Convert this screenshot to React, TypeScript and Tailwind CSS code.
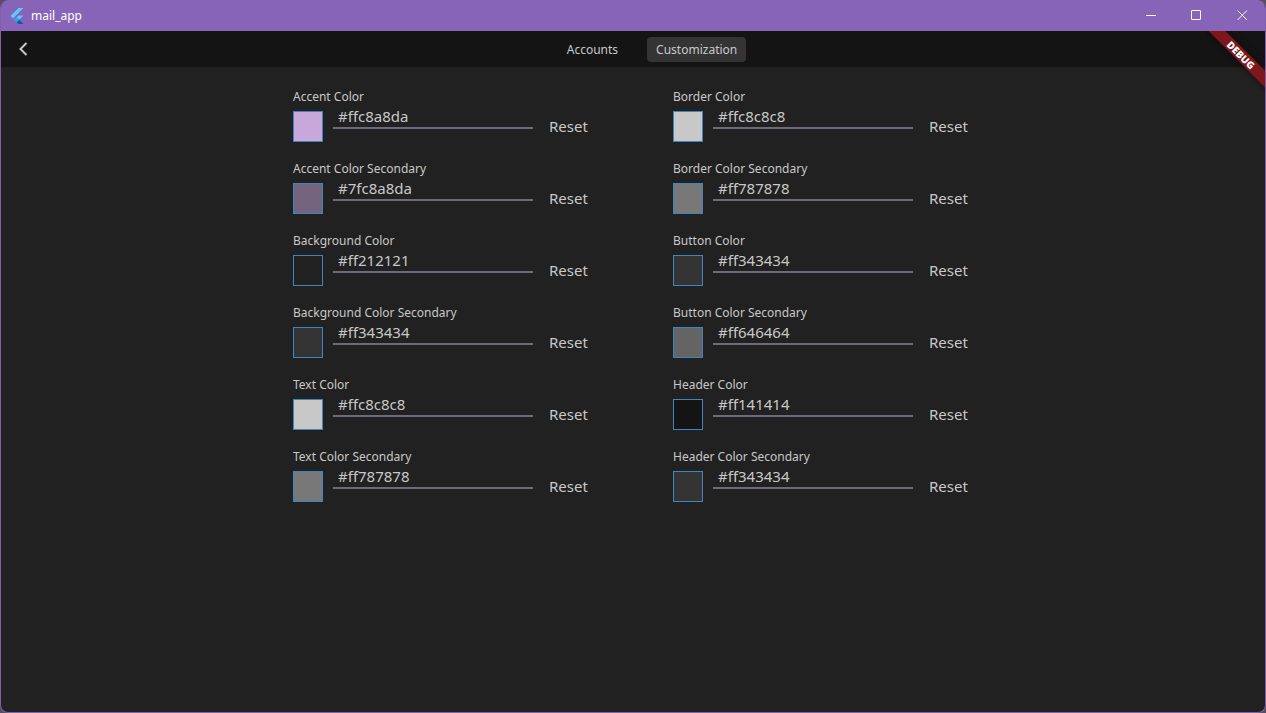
import { useState } from "react";

type Field = { label: string; initial: string };

const LEFT: Field[] = [
  { label: "Accent Color", initial: "#ffc8a8da" },
  { label: "Accent Color Secondary", initial: "#7fc8a8da" },
  { label: "Background Color", initial: "#ff212121" },
  { label: "Background Color Secondary", initial: "#ff343434" },
  { label: "Text Color", initial: "#ffc8c8c8" },
  { label: "Text Color Secondary", initial: "#ff787878" },
];

const RIGHT: Field[] = [
  { label: "Border Color", initial: "#ffc8c8c8" },
  { label: "Border Color Secondary", initial: "#ff787878" },
  { label: "Button Color", initial: "#ff343434" },
  { label: "Button Color Secondary", initial: "#ff646464" },
  { label: "Header Color", initial: "#ff141414" },
  { label: "Header Color Secondary", initial: "#ff343434" },
];

// Values are stored as #aarrggbb, while CSS expects #rrggbbaa.
function toCss(argb: string) {
  return /^#[0-9a-f]{8}$/i.test(argb) ? `#${argb.slice(3)}${argb.slice(1, 3)}` : "transparent";
}

function ColorField({ label, initial }: Field) {
  const [value, setValue] = useState(initial);
  const id = label.toLowerCase().replace(/ /g, "-");
  return (
    <div className="flex flex-col">
      <label htmlFor={id} className="text-[12px] leading-[18px]">
        {label}
      </label>
      <div className="flex h-[41px] items-center">
        <button
          type="button"
          aria-label={`Pick ${label}`}
          className="h-[31px] w-[30px] shrink-0 border border-[#3d87be]"
          style={{ backgroundColor: toCss(value) }}
        />
        <input
          id={id}
          type="text"
          value={value}
          onChange={(e) => setValue(e.target.value)}
          className="ml-[10px] h-[23px] w-[200px] self-start border-b-2 border-[#706a7a] bg-transparent px-[5px] pb-0.5 text-[15px] leading-[19px] outline-none"
        />
        <button type="button" onClick={() => setValue(initial)} className="h-[31px] px-4 text-[15px] leading-[21px]">
          Reset
        </button>
      </div>
    </div>
  );
}

function FlutterLogo() {
  return (
    <svg viewBox="2 0 20 24" className="h-4 w-[14px]" aria-hidden="true">
      <path fill="#5ccbfa" d="M14.314 0L2.3 12 6 15.7 21.684.013h-7.357z" />
      <path fill="#5ccbfa" d="M14.328 11.072L7.857 17.53l3.69 3.69L21.7 11.072z" />
      <path fill="#0b5ba5" d="M11.547 21.22l2.78 2.78H21.7l-6.46-6.468z" />
      <path fill="#29a3e8" d="M7.857 17.53l3.69-3.69 3.693 3.692-3.693 3.688z" />
    </svg>
  );
}

export default function App() {
  return (
    <div className="min-h-screen bg-[#55505c]">
      <div className="relative flex min-h-screen flex-col overflow-hidden rounded-lg border-x border-b border-[#7f5fae] bg-[#212121] font-['Noto_Sans','Open_Sans',sans-serif] text-[#c8c8c8]">
        <div className="flex h-[31px] items-center bg-[#8764b8] pl-[9px] text-white">
          <FlutterLogo />
          <span className="ml-[7px] text-[12px] leading-4">mail_app</span>
          <div className="ml-auto flex h-full">
            <button type="button" aria-label="Minimize" className="flex w-[45px] items-center justify-center">
              <svg viewBox="0 0 11 11" className="size-[11px]" stroke="currentColor" fill="none">
                <path d="M1 5.5h10" />
              </svg>
            </button>
            <button type="button" aria-label="Maximize" className="flex w-[46px] items-center justify-center">
              <svg viewBox="0 0 11 11" className="size-[11px]" stroke="currentColor" fill="none">
                <rect x=".5" y=".5" width="9" height="9" rx=".5" />
              </svg>
            </button>
            <button type="button" aria-label="Close" className="flex w-[46px] items-center justify-center">
              <svg viewBox="0 0 11 11" className="size-[11px]" stroke="currentColor" fill="none">
                <path d="M.5.5l9.500 9.500M10 .5L.5 10" />
              </svg>
            </button>
          </div>
        </div>

        <header className="grid h-9 grid-cols-[1fr_auto_1fr] items-center bg-[#141414]">
          <button type="button" aria-label="Back" className="ml-[15px] flex size-4 items-center justify-center">
            <svg viewBox="0 0 16 16" className="size-4" stroke="currentColor" strokeWidth="2" fill="none">
              <path d="M10.500 2L4.500 8l6 6" />
            </svg>
          </button>
          <nav className="ml-[38px] flex gap-5 text-[12px] leading-[17px]">
            <button type="button" className="h-[25px] rounded px-[9px]">
              Accounts
            </button>
            <button type="button" className="h-[25px] rounded bg-[#343434] px-[9px]">
              Customization
            </button>
          </nav>
        </header>

        <main className="mx-auto grid w-full max-w-[760px] grid-cols-2 pt-[21px]">
          {[LEFT, RIGHT].map((fields, i) => (
            <div key={i} className="flex flex-col gap-[13px] pl-10">
              {fields.map((field) => (
                <ColorField key={field.label} {...field} />
              ))}
            </div>
          ))}
        </main>

        <div className="pointer-events-none absolute top-[31px] right-0 size-[60px] overflow-hidden">
          <div className="absolute top-[18px] left-[-14px] flex h-3 w-[100px] rotate-45 items-center justify-center bg-[#7d171b] font-['Open_Sans','Noto_Sans',sans-serif] text-[10px] leading-3 font-extrabold text-white shadow-[0_0_6px_rgba(0,0,0,0.5)]">
            DEBUG
          </div>
        </div>
      </div>
    </div>
  );
}
